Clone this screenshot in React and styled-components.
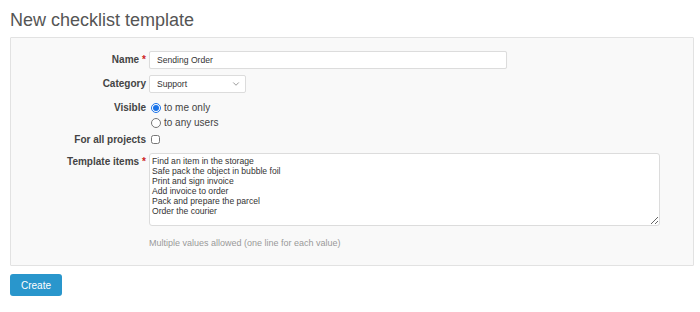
import React from "react";
import styled, { createGlobalStyle } from "styled-components";
import { ChevronDown } from "lucide-react";

const GlobalStyle = createGlobalStyle`
  body {
    margin: 0;
    background: #fff;
    font-family: "Liberation Sans", Arial, sans-serif;
    color: #333;
  }
`;

const Page = styled.div`
  padding: 9px 6px 0 10px;
`;

const Title = styled.h2`
  margin: 0;
  font-size: 18px;
  line-height: 22px;
  font-weight: normal;
  color: #555;
`;

const Box = styled.div`
  margin-top: 6px;
  padding: 13px 0 16px;
  background: #f9f9f9;
  border: 1px solid #e2e2e2;
  border-radius: 1px;
`;

const Row = styled.div`
  display: flex;
  align-items: flex-start;
  margin-top: ${(p) => p.$gap || 0}px;
`;

const Label = styled.label`
  flex: 0 0 135px;
  text-align: right;
  font-size: 10px;
  font-weight: bold;
  color: #444;
  line-height: ${(p) => p.$lh || 18}px;
  padding-top: ${(p) => p.$pt || 0}px;
`;

const Req = styled.span`
  color: #c22;
  margin-left: 3px;
`;

const Control = styled.div`
  margin-left: 3px;
  display: flex;
  flex-direction: column;
`;

const TextInput = styled.input`
  display: block;
  box-sizing: border-box;
  width: 358px;
  height: 18px;
  padding: 0 7px;
  border: 1px solid #dcdcdc;
  border-radius: 2px;
  background: #fff;
  box-shadow: 0 0 1px rgba(0, 0, 0, 0.06);
  font-family: inherit;
  font-size: 8.6px;
  color: #333;
  outline: none;
`;

const SelectWrap = styled.div`
  position: relative;
  width: 97px;
  height: 18px;
`;

const Select = styled.select`
  display: block;
  appearance: none;
  box-sizing: border-box;
  width: 100%;
  height: 18px;
  margin: 0;
  padding: 0 7px;
  border: 1px solid #dcdcdc;
  border-radius: 2px;
  background: #fff;
  font-family: inherit;
  font-size: 8.6px;
  color: #333;
  outline: none;
`;

const Chevron = styled(ChevronDown)`
  position: absolute;
  right: 5px;
  top: 4px;
  color: #666;
  pointer-events: none;
`;

const Option = styled.label`
  display: flex;
  align-items: center;
  height: 15px;
  font-size: 10px;
  color: #444;
`;

const Radio = styled.input`
  width: 10px;
  height: 10px;
  margin: 0 3px 0 2px;
  accent-color: #1a73e8;
`;

const Check = styled.input`
  width: 9px;
  height: 9px;
  margin: 0 0 0 2px;
`;

const Area = styled.textarea`
  display: block;
  box-sizing: border-box;
  width: 511px;
  height: 73px;
  padding: 2px 2px;
  border: 1px solid #dcdcdc;
  border-radius: 3px;
  background: #fff;
  font-family: inherit;
  font-size: 8.6px;
  line-height: 10px;
  color: #333;
  outline: none;
`;

const Hint = styled.div`
  margin-top: 11px;
  font-size: 9px;
  line-height: 12px;
  color: #999;
`;

const Button = styled.button`
  display: block;
  margin-top: 8px;
  width: 52px;
  height: 22px;
  padding: 0;
  border: none;
  border-radius: 3px;
  background: #2996cc;
  color: #fff;
  font-family: inherit;
  font-size: 10px;
  cursor: pointer;
`;

const items = [
  "Find an item in the storage",
  "Safe pack the object in bubble foil",
  "Print and sign invoice",
  "Add invoice to order",
  "Pack and prepare the parcel",
  "Order the courier",
].join("\n");

const App = () => {
  return (
    <Page>
      <GlobalStyle />
      <Title>New checklist template</Title>
      <Box>
        <Row>
          <Label>
            Name<Req>*</Req>
          </Label>
          <Control>
            <TextInput defaultValue="Sending Order" />
          </Control>
        </Row>
        <Row $gap={6}>
          <Label>Category</Label>
          <Control>
            <SelectWrap>
              <Select defaultValue="support">
                <option value="support">Support</option>
              </Select>
              <Chevron size={10} strokeWidth={1.6} />
            </SelectWrap>
          </Control>
        </Row>
        <Row $gap={7}>
          <Label $lh={15}>Visible</Label>
          <Control>
            <Option>
              <Radio type="radio" name="visible" defaultChecked />
              to me only
            </Option>
            <Option>
              <Radio type="radio" name="visible" />
              to any users
            </Option>
          </Control>
        </Row>
        <Row $gap={2}>
          <Label $lh={15}>For all projects</Label>
          <Control>
            <Option>
              <Check type="checkbox" />
            </Option>
          </Control>
        </Row>
        <Row $gap={6}>
          <Label $lh={12} $pt={3}>
            Template items<Req>*</Req>
          </Label>
          <Control>
            <Area defaultValue={items} />
            <Hint>Multiple values allowed (one line for each value)</Hint>
          </Control>
        </Row>
      </Box>
      <Button>Create</Button>
    </Page>
  );
};

export default App;
